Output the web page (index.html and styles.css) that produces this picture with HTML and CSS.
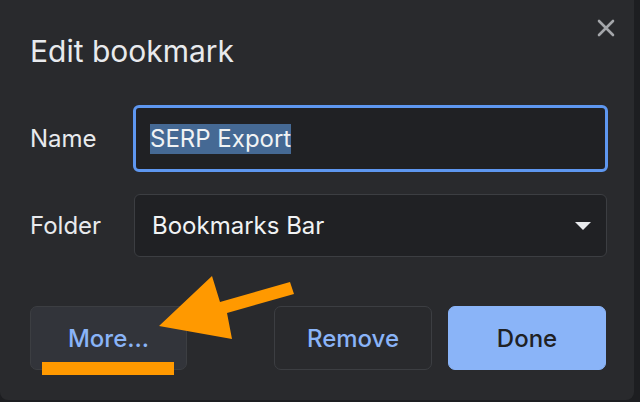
FILE: index.html
```html
<!DOCTYPE html>
<html lang="en">
<head>
  <meta charset="UTF-8">
  <title>Edit bookmark</title>
  <link rel="stylesheet" href="styles.css">
</head>
<body>
  <div class="dialog">
    <div class="header">
      <h1>Edit bookmark</h1>
      <button class="close" aria-label="Close">
        <svg width="18" height="18" viewBox="0 0 18 18">
          <path d="M2 2 L16 16 M16 2 L2 16" stroke="#a4a6aa" stroke-width="2.6" stroke-linecap="round"/>
        </svg>
      </button>
    </div>

    <div class="form">
      <label>Name</label>
      <div class="field focused"><span class="selected">SERP Export</span></div>
      <label>Folder</label>
      <div class="field select">
        <span>Bookmarks Bar</span>
        <svg width="16" height="8" viewBox="0 0 16 8"><path d="M0 0 H16 L8 8 Z" fill="#e8eaed"/></svg>
      </div>
    </div>

    <div class="actions">
      <button class="btn more">More...</button>
      <button class="btn remove">Remove</button>
      <button class="btn done">Done</button>
    </div>

    <svg class="annotation" width="640" height="402" viewBox="0 0 640 402">
      <polygon points="159,326 212,276 220,302 290,282 294,294 227,313 232,339" fill="#ff9900"/>
      <rect x="42" y="362" width="132" height="13" fill="#ff9900"/>
    </svg>
  </div>
</body>
</html>
```

FILE: styles.css
```css
* {
  box-sizing: border-box;
}
body {
  margin: 0;
  background: #1d1e21;
  font-family: Inter, "Noto Sans", sans-serif;
  color: #e8eaed;
}
.dialog {
  position: relative;
  width: 634px;
  height: 400px;
  background: #292a2d;
  border-radius: 0 0 8px 8px;
  padding: 0 28px 0 30px;
}
.header {
  display: flex;
  justify-content: space-between;
  align-items: flex-start;
}
h1 {
  margin: 33px 0 0;
  font-size: 30px;
  line-height: 36px;
  font-weight: 400;
}
.close {
  margin: 19px -9px 0 0;
  padding: 0;
  border: none;
  background: none;
  width: 18px;
  height: 18px;
}
.form {
  display: grid;
  grid-template-columns: 104px 1fr;
  align-items: center;
  row-gap: 22px;
  margin-top: 36px;
  margin-right: -1px;
}
label {
  font-size: 24px;
}
.field {
  height: 63px;
  background: #202124;
  border: 1px solid #3c3e42;
  border-radius: 6px;
  display: flex;
  align-items: center;
  font-size: 24px;
  color: #f1f3f4;
}
.field.focused {
  height: 67px;
  margin: 0 -1px;
  border: 3px solid #5e97f0;
  padding-left: 14px;
}
.selected {
  background: #456994;
  line-height: 30px;
}
.select {
  justify-content: space-between;
  padding: 0 15px 0 17px;
}
.actions {
  display: flex;
  gap: 16px;
  margin-top: 49px;
}
.btn {
  width: 158px;
  height: 64px;
  border-radius: 7px;
  font-family: inherit;
  font-size: 24px;
  font-weight: 500;
  color: #8ab4f8;
  background: transparent;
  border: 1px solid #3c3e42;
}
.more {
  width: 157px;
  margin-right: auto;
  background: #32343a;
}
.done {
  background: #8ab4f8;
  border-color: #8ab4f8;
  color: #202124;
}
.annotation {
  position: absolute;
  left: 0;
  top: 0;
  pointer-events: none;
}
```
